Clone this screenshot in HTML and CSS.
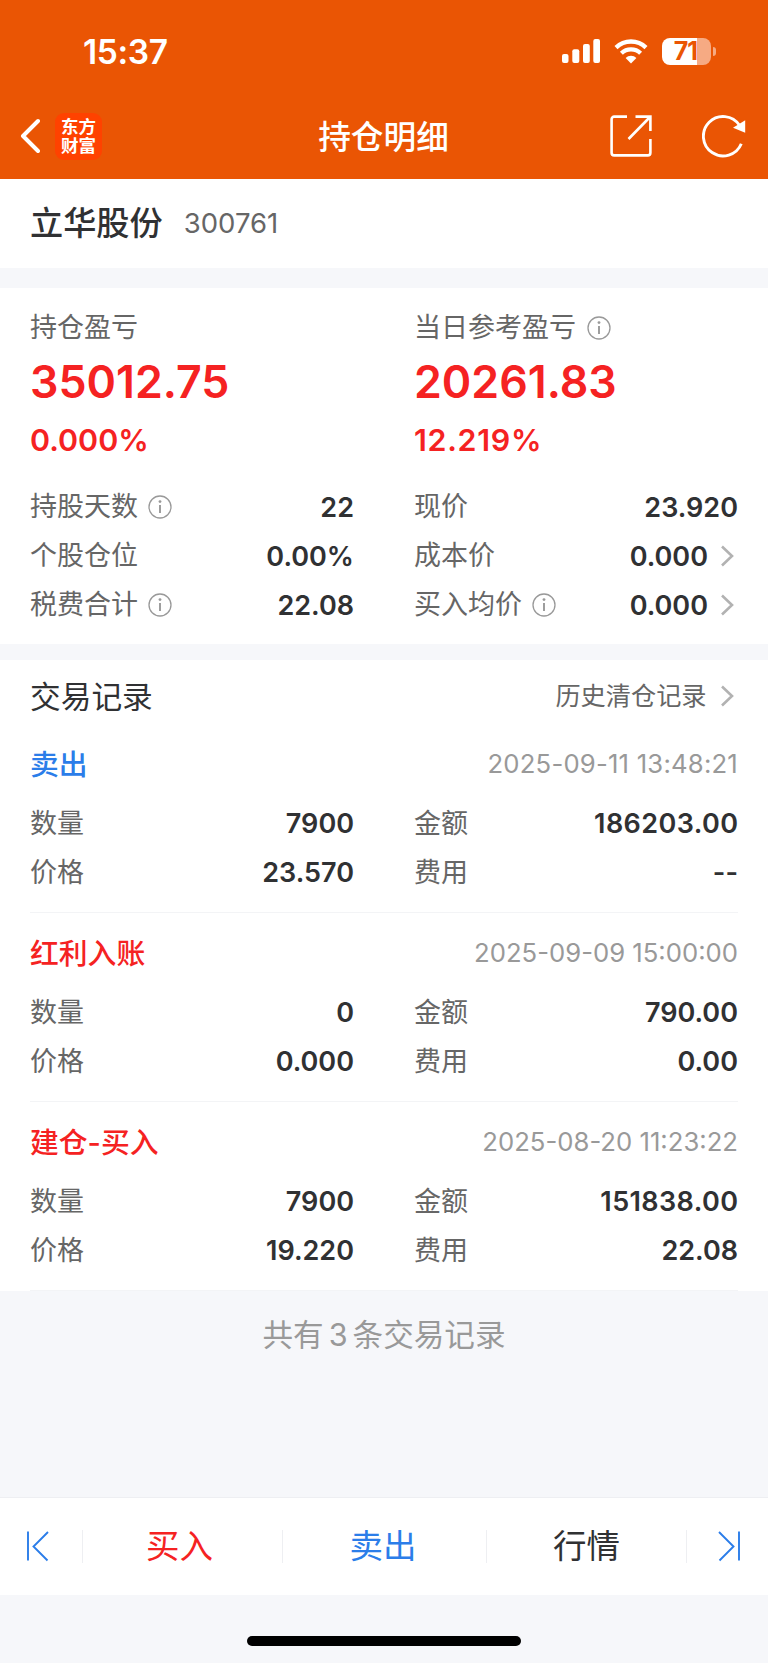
FILE: index.html
```html
<!DOCTYPE html>
<html lang="zh-CN">
<head>
<meta charset="utf-8">
<title>持仓明细</title>
<link rel="stylesheet" href="styles.css">
</head>
<body>
<svg class="defs" width="0" height="0">
  <symbol id="info" viewBox="0 0 24 24"><circle cx="12" cy="12" r="11" fill="none" stroke="#999" stroke-width="1.3"/><path d="M12 10v8" stroke="#999" stroke-width="1.9"/><circle cx="12" cy="6.6" r="1.4" fill="#999"/></symbol>
  <symbol id="more" viewBox="0 0 14 22"><path d="M2 1.5 12 11 2 20.5" fill="none" stroke="#b2b2b2" stroke-width="2.6"/></symbol>
</svg>
<div class="page">
  <header class="top">
    <div class="status">
      <span class="clock">15:37</span>
      <div class="signals">
        <svg width="38" height="24" viewBox="0 0 38 24" fill="#fff"><rect y="15" width="6.5" height="9" rx="2"/><rect x="10.3" y="10.3" width="7" height="13.7" rx="2"/><rect x="21" y="5" width="6.8" height="19" rx="2"/><rect x="31.3" width="6.7" height="24" rx="2"/></svg>
        <svg class="wifi" width="34" height="25" viewBox="0 0 34 25"><g fill="none" stroke="#fff" stroke-width="4.3"><path d="M2 8.6a21.5 21.5 0 0 1 30 0"/><path d="M7.4 14.2a14 14 0 0 1 19.2 0"/></g><path d="M17 24.5 11.6 19a7.8 7.8 0 0 1 10.8 0z" fill="#fff"/></svg>
        <div class="battery"><span class="level">71</span><i class="cap"></i></div>
      </div>
    </div>
    <nav class="nav">
      <div class="left">
        <svg width="20" height="36" viewBox="0 0 20 36"><path d="M18 3 3 18l15 15" fill="none" stroke="#fff" stroke-width="4" stroke-linecap="round" stroke-linejoin="round"/></svg>
        <div class="logo"><span>东方</span><span>财富</span></div>
      </div>
      <h1>持仓明细</h1>
      <div class="right">
        <svg width="42" height="42" viewBox="0 0 42 42" fill="none" stroke="#fff" stroke-width="2.6"><path d="M17 1.6H4.2a2.6 2.6 0 0 0-2.6 2.6v33.6a2.6 2.6 0 0 0 2.6 2.6h33.6a2.6 2.6 0 0 0 2.6-2.6V24"/><path d="M25.5 1.6h14.9V16M40 2 18.500 24"/></svg>
        <svg width="44" height="44" viewBox="0 0 44 44"><path d="M37.500 11.300A19.700 19.700 0 1 0 39.300 29.700" fill="none" stroke="#fff" stroke-width="2.900"/><path d="M43.200 6.300v12.400L31 13.800z" fill="#fff"/></svg>
      </div>
    </nav>
  </header>

  <section class="stock"><span class="name">立华股份</span><span class="code">300761</span></section>

  <section class="summary">
    <div class="col">
      <div class="label">持仓盈亏</div>
      <div class="profit">35012.75</div>
      <div class="rate">0.000%</div>
      <div class="row"><span class="label">持股天数<svg><use href="#info"/></svg></span><b>22</b></div>
      <div class="row"><span class="label">个股仓位</span><b>0.00%</b></div>
      <div class="row"><span class="label">税费合计<svg><use href="#info"/></svg></span><b>22.08</b></div>
    </div>
    <div class="col">
      <div class="label today">当日参考盈亏<svg><use href="#info"/></svg></div>
      <div class="profit">20261.83</div>
      <div class="rate spaced">12.219%</div>
      <div class="row"><span class="label">现价</span><b>23.920</b></div>
      <div class="row"><span class="label">成本价</span><b>0.000<svg class="more"><use href="#more"/></svg></b></div>
      <div class="row"><span class="label">买入均价<svg><use href="#info"/></svg></span><b>0.000<svg class="more"><use href="#more"/></svg></b></div>
    </div>
  </section>

  <section class="records">
    <div class="heading"><h2>交易记录</h2><span class="history">历史清仓记录<svg class="more"><use href="#more"/></svg></span></div>
    <article class="record">
      <div class="head"><span class="kind sell">卖出</span><time class="spaced">2025-09-11 13:48:21</time></div>
      <div class="grid">
        <div class="row"><span class="label">数量</span><b>7900</b></div>
        <div class="row"><span class="label">金额</span><b class="amount">186203.00</b></div>
        <div class="row"><span class="label">价格</span><b>23.570</b></div>
        <div class="row"><span class="label">费用</span><b>--</b></div>
      </div>
    </article>
    <article class="record">
      <div class="head"><span class="kind buy">红利入账</span><time>2025-09-09 15:00:00</time></div>
      <div class="grid">
        <div class="row"><span class="label">数量</span><b>0</b></div>
        <div class="row"><span class="label">金额</span><b>790.00</b></div>
        <div class="row"><span class="label">价格</span><b>0.000</b></div>
        <div class="row"><span class="label">费用</span><b>0.00</b></div>
      </div>
    </article>
    <article class="record">
      <div class="head"><span class="kind buy">建仓-买入</span><time>2025-08-20 11:23:22</time></div>
      <div class="grid">
        <div class="row"><span class="label">数量</span><b>7900</b></div>
        <div class="row"><span class="label">金额</span><b class="amount">151838.00</b></div>
        <div class="row"><span class="label">价格</span><b>19.220</b></div>
        <div class="row"><span class="label">费用</span><b>22.08</b></div>
      </div>
    </article>
  </section>

  <p class="total">共有<span>3</span>条交易记录</p>

  <footer class="bar">
    <div class="step"><svg width="24" height="32" viewBox="0 0 24 32"><path d="M2 1.5v29M22 2 7.500 16.500 21.500 30.500" fill="none" stroke="#2b7de9" stroke-width="1.9"/></svg></div>
    <div class="tab buy">买入</div>
    <div class="tab sell">卖出</div>
    <div class="tab">行情</div>
    <div class="step"><svg width="24" height="32" viewBox="0 0 24 32"><path d="M22 1.500v29M2 2 16.500 16.500 2.500 30.500" fill="none" stroke="#2b7de9" stroke-width="1.9"/></svg></div>
  </footer>
  <div class="home"><i></i></div>
</div>
</body>
</html>
```
FILE: styles.css
```css
* { box-sizing: border-box; margin: 0; padding: 0; }
body { background: #f6f7fa; color: #303133; font-family: Inter, "Noto Sans CJK SC", sans-serif; }
svg { display: block; flex: none; }
.defs { display: none; }
.page { width: 768px; height: 1663px; display: flex; flex-direction: column; overflow: hidden; }

.top { height: 179.300px; background: #ea5504; color: #fff; flex: none; }
.status { height: 92px; padding: 10px 52px 0 83px; display: flex; justify-content: space-between; align-items: center; }
.clock { font-size: 33.500px; font-weight: 600; letter-spacing: -.4px; padding-top: 1px; }
.signals { display: flex; align-items: center; }
.wifi { margin: 0 14px 0 14px; }
.battery { position: relative; width: 49px; height: 27px; border-radius: 8px; background: linear-gradient(90deg, #fff 71%, #f6aa83 71%); margin-right: 5px; display: flex; align-items: center; justify-content: center; }
.level { color: #ea5504; font-size: 25px; font-weight: 700; line-height: 27px; letter-spacing: -1px; padding: 1px 2px 0 0; }
.cap { position: absolute; right: -5px; top: 9px; width: 3px; height: 9px; border-radius: 0 4px 4px 0; background: #f6aa83; }
.nav { height: 88px; display: grid; grid-template-columns: 1fr auto 1fr; align-items: center; padding: 0 21px 0 20px; }
.nav h1 { font-size: 32.700px; font-weight: 500; line-height: 40px; padding-top: 1px; }
.left { display: flex; align-items: center; gap: 15px; }
.logo { width: 47px; height: 47px; border-radius: 9px; background: #ff4200; display: flex; flex-direction: column; align-items: center; justify-content: center; font: 700 17.500px/19px "Noto Sans CJK SC", sans-serif; padding-bottom: 2px; }
.right { display: flex; justify-content: flex-end; align-items: center; gap: 50px; padding: 0 1px 0 0; }

.stock { height: 88.700px; background: #fff; padding: 0 30px; display: flex; align-items: center; gap: 21px; flex: none; }
.name { font-size: 33.200px; font-weight: 500; padding-bottom: 6px; }
.code { font-size: 27.500px; color: #666; padding-bottom: 1px; }

.summary { margin-top: 20px; height: 356px; padding: 16px 30px 0; background: #fff; display: grid; grid-template-columns: 324px 324px; gap: 60px; flex: none; }
.label { display: flex; align-items: center; gap: 10px; font-size: 27px; line-height: 48px; color: #666; }
.label svg { width: 24px; height: 24px; }
.label.today { gap: 11px; }
.profit { font-size: 44.700px; font-weight: 600; line-height: 61px; color: #f52222; }
.rate { font-size: 30.400px; font-weight: 600; line-height: 55px; margin-bottom: 15px; color: #f52222; }
.rate.spaced { letter-spacing: .7px; }
.row { display: flex; justify-content: space-between; align-items: center; height: 49px; }
.row b { display: flex; align-items: center; font-size: 27px; font-weight: 600; }
.row .amount { letter-spacing: .4px; margin-right: -.4px; }
.more { width: 14px; height: 22px; margin: 0 4px 0 12px; }

.records { margin-top: 16px; padding: 8px 30px 0; background: #fff; height: 631px; flex: none; }
.heading { height: 56px; display: flex; justify-content: space-between; align-items: center; }
.heading h2 { font-size: 30.700px; font-weight: 400; padding-bottom: 3px; }
.history { display: flex; align-items: center; font-size: 25.200px; line-height: 36px; color: #666; }
.history .more { margin-left: 13.500px; }
.record { height: 189px; padding-top: 16px; border-bottom: 1px solid #f3f4f6; }
.head { height: 48px; display: flex; justify-content: space-between; align-items: center; margin-bottom: 11.500px; }
.kind { font-size: 28.800px; font-weight: 500; padding-bottom: 2px; }
time { font-size: 25.700px; color: #999; }
time.spaced { letter-spacing: .2px; }
.grid { display: grid; grid-template-columns: 324px 324px; column-gap: 60px; }
.buy { color: #f52222; }
.sell { color: #2b7de9; }

.total { text-align: center; font-size: 30.600px; line-height: 46px; padding-top: 21px; color: #999; flex: 1; }
.total span { margin: 0 5px; }
.bar { height: 98.500px; border-top: 1px solid #eeeff2; background: #fff; display: grid; grid-template-columns: 82px 200px 204px 200px 82px; align-items: center; flex: none; }
.step { height: 33px; display: flex; justify-content: center; align-items: center; }
.step:first-child { padding-right: 6px; }
.step:last-child { padding-left: 2px; }
.bar > * + * { border-left: 1px solid #eeeff2; }
.tab { height: 33px; line-height: 33px; text-align: center; font-size: 33.500px; }
.tab.buy, .tab.sell { border-left-color: #eeeff2; padding-right: 3px; }
.tab.buy { padding-right: 6px; }
.home { height: 68px; padding-top: 41px; flex: none; }
.home i { display: block; width: 274px; height: 10px; margin: 0 auto; border-radius: 5px; background: #000; }
```
